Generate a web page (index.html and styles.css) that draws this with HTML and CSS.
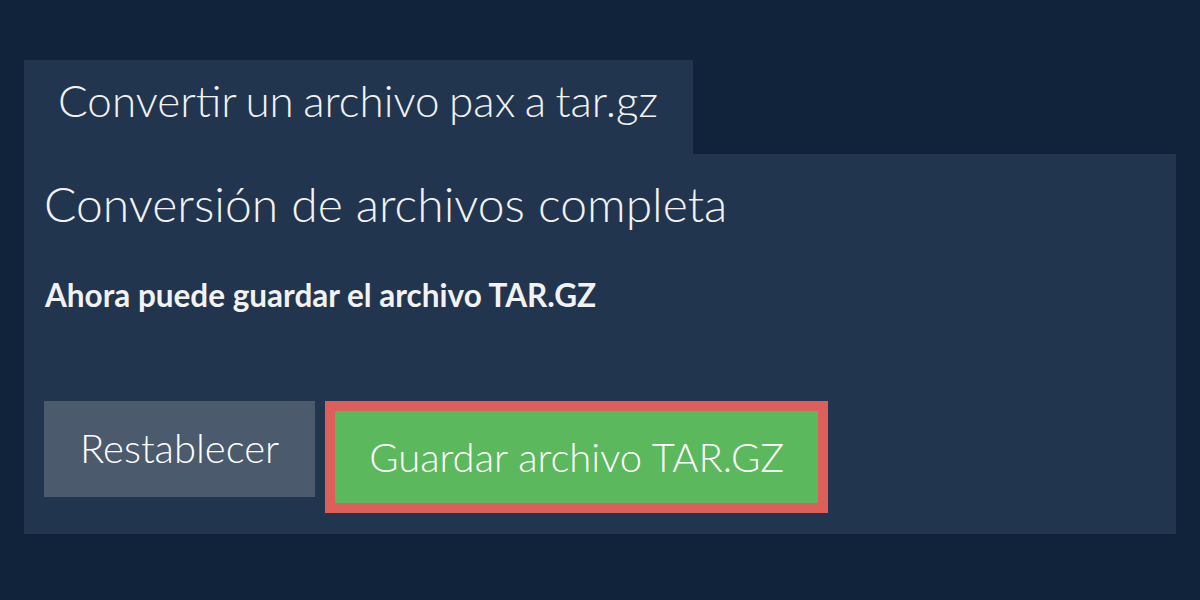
FILE: index.html
```html
<!DOCTYPE html>
<html lang="es">
<head>
    <meta charset="UTF-8">
    <title>Convertir un archivo pax a tar.gz</title>
    <link rel="stylesheet" href="styles.css">
</head>
<body>
    <div class="converter">
        <div class="tab">Convertir un archivo pax a tar.gz</div>
        <div class="panel">
            <h1>Conversión de archivos completa</h1>
            <p class="status">Ahora puede guardar el archivo TAR.GZ</p>
            <div class="actions">
                <button class="btn btn-reset">Restablecer</button>
                <button class="btn btn-save">Guardar archivo TAR.GZ</button>
            </div>
        </div>
    </div>
</body>
</html>
```

FILE: styles.css
```css
body {
    background-color: #11233a;
    color: #f2f2f2;
    font-family: Lato, "Open Sans", sans-serif;
    margin: 0;
    padding: 60px 24px 0;
}

.converter {
    display: flex;
    flex-direction: column;
    align-items: flex-start;
}

.tab {
    background: #21354f;
    font-size: 44px;
    font-weight: 300;
    line-height: 54px;
    word-spacing: -2.5px;
    padding: 13px 35px 27px 34px;
}

.panel {
    background: #21354f;
    align-self: stretch;
    padding: 0 20px 21px;
}

.panel h1 {
    font-size: 48px;
    font-weight: 300;
    line-height: 58px;
    margin: 0;
    padding-top: 21px;
}

.status {
    font-size: 31.5px;
    font-weight: 700;
    line-height: 38px;
    margin: 43px 0 87px;
    padding-left: 1px;
}

.actions {
    display: flex;
    align-items: flex-start;
    gap: 10px;
}

.btn {
    font-family: Lato, "Open Sans", sans-serif;
    font-size: 40px;
    font-weight: 300;
    color: #ffffff;
    border: none;
    margin: 0;
}

.btn-reset {
    background: #4b5b6d;
    height: 96px;
    padding: 0 36px 2px;
}

.btn-save {
    background: #5cb85c;
    border: 10px solid #dc5f5b;
    height: 112px;
    padding: 0 34px;
}
```
